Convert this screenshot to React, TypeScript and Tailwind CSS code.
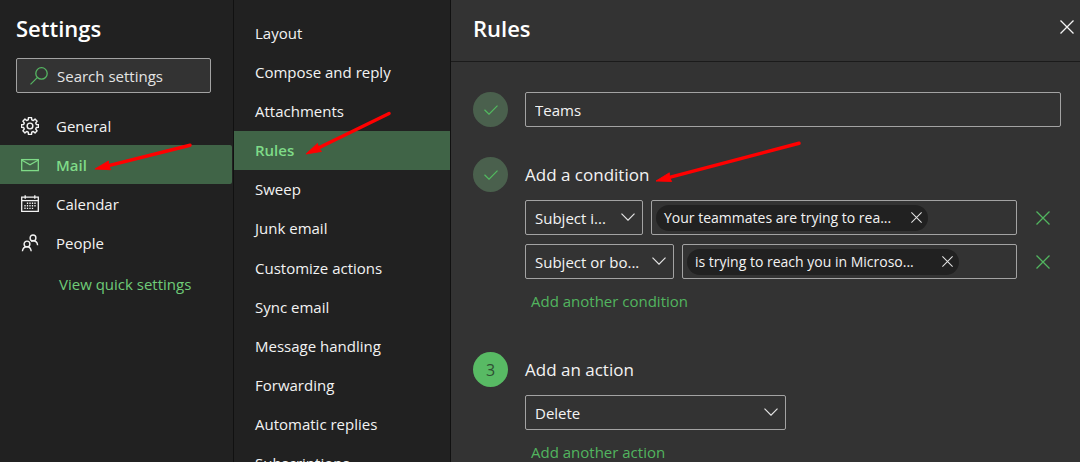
import type { ReactNode } from 'react';

const categories = [
  { label: 'General', icon: <GearIcon /> },
  { label: 'Mail', icon: <MailIcon /> },
  { label: 'Calendar', icon: <CalendarIcon /> },
  { label: 'People', icon: <PeopleIcon /> },
];

const mailSections = [
  'Layout',
  'Compose and reply',
  'Attachments',
  'Rules',
  'Sweep',
  'Junk email',
  'Customize actions',
  'Sync email',
  'Message handling',
  'Forwarding',
  'Automatic replies',
  'Subscriptions',
];

function SearchIcon() {
  return (
    <svg className="shrink-0" width="18" height="18" viewBox="0 0 18 18" fill="none" stroke="#55b562" strokeWidth="1.3">
      <circle cx="11.5" cy="6.4" r="5.7" />
      <path d="M7.5 10.4 0.5 17.4" />
    </svg>
  );
}

function GearIcon() {
  return (
    <svg width="18" height="18" viewBox="0.8 0.4 16.4 16.4" fill="none" stroke="currentColor" strokeWidth="1.3" strokeLinejoin="round">
      <path d="M7.4 3 7.6 1h2.8l.2 2 1.4.6 1.600-1.300 1.900 1.900-1.300 1.600.6 1.400 2 .2v2.400l-2 .2-.6 1.400 1.300 1.600-1.900 1.900-1.600-1.300-1.400.6-.2 2H7.600l-.2-2-1.400-.6-1.600 1.300-1.900-1.900 1.300-1.600-.6-1.400-2-.2V7.400l2-.2.6-1.400-1.300-1.600 1.900-1.900L6 3.600z" />
      <circle cx="9" cy="8.600" r="2.600" />
    </svg>
  );
}

function MailIcon() {
  return (
    <svg width="18" height="18" viewBox="0 0 18 18" fill="none" stroke="currentColor" strokeWidth="1.3">
      <rect x=".7" y="3.6" width="16.6" height="11" />
      <path d="m1 4.2 8 4.6 8-4.6" />
    </svg>
  );
}

function CalendarIcon() {
  return (
    <svg width="18" height="18" viewBox="0 0 18 18" fill="none" stroke="currentColor" strokeWidth="1.3">
      <path d="M.7 2.2h16.6v14.1H.7zM.7 5.6h16.6M4.2.3v3.4M13.8.3v3.4" />
      <path d="M6.5 7.5v7M9 7.5v7M11.5 7.5v7M14 7.5v4.5M4 10v4.5" strokeDasharray="1.4 1.2" />
    </svg>
  );
}

function PeopleIcon() {
  return (
    <svg width="18" height="18" viewBox="0 0 18 18" fill="none" stroke="currentColor" strokeWidth="1.4">
      <circle cx="12" cy="3.9" r="2.9" />
      <circle cx="6" cy="10" r="2.9" />
      <path d="M1.4 17.3c.3-2.8 2.2-4.5 4.6-4.5s3.900 1.700 4.200 4.500M10.200 7.300c.6-.4 1.200-.5 1.900-.5 2.400 0 4.200 1.600 4.500 4.400" />
    </svg>
  );
}

function CheckIcon() {
  return (
    <svg width="14" height="10" viewBox="0 0 14 10" fill="none" stroke="#52ba5f" strokeWidth="1.2">
      <path d="M.5 4.800 5 9.200 13.500.7" />
    </svg>
  );
}

function CloseIcon({ className }: { className: string }) {
  return (
    <svg className={className} viewBox="0 0 14 14" fill="none" stroke="currentColor" strokeWidth="1.3">
      <path d="m.5.5 13 13M13.500.5l-13 13" />
    </svg>
  );
}

// Red pointer drawn from the tail (top right) to the tip (bottom left)
function Arrow({ width, height, className }: { width: number; height: number; className: string }) {
  const length = Math.hypot(width, height);
  const angle = (Math.atan2(-height, width) * 180) / Math.PI;
  return (
    <svg
      className={`pointer-events-none absolute z-10 overflow-visible ${className}`}
      width={width}
      height={height}
      aria-hidden="true"
    >
      <g transform={`translate(0 ${height}) rotate(${angle})`} fill="#ff0000" stroke="#ff0000">
        <path d={`M12 0H${length - 1}`} strokeWidth="3.4" strokeLinecap="round" />
        <path d="M0 0 15-4.500 14 0 15 4.500z" strokeWidth=".8" />
      </g>
    </svg>
  );
}

function Dropdown({ id, label, value, className }: { id: string; label: string; value: string; className: string }) {
  return (
    <div className={`relative shrink-0 ${className}`}>
      <select
        id={id}
        aria-label={label}
        className="block h-[35px] w-full appearance-none rounded-xs border border-[#a3a3a3] bg-[#333333] pr-6 pl-[9px] text-[#f3f3f3] outline-none"
      >
        <option>{value}</option>
      </select>
      <svg
        className="pointer-events-none absolute top-[13px] right-2"
        width="14"
        height="8"
        viewBox="0 0 14 8"
        fill="none"
        stroke="#e4e4e4"
        strokeWidth="1.2"
      >
        <path d="m.5.700 6.500 6.500L13.500.7" />
      </svg>
    </div>
  );
}

function Condition({ id, field, fieldClass, text }: { id: string; field: string; fieldClass: string; text: string }) {
  return (
    <div className="flex items-center">
      <Dropdown id={`${id}-field`} label="Condition" value={field} className={fieldClass} />
      <div className="ml-2 flex h-[35px] min-w-0 flex-1 items-center rounded-xs border border-[#a3a3a3] px-1">
        <span className="flex h-[26px] w-[272px] shrink-0 items-center justify-between rounded-full bg-[#212121] pr-[6px] pl-2 text-sm whitespace-nowrap text-[#f3f3f3]">
          {text}
          <button type="button" aria-label="Remove value" className="text-[#e4e4e4]">
            <CloseIcon className="size-[11px]" />
          </button>
        </span>
        <input id={`${id}-value`} aria-label="Condition value" className="w-full min-w-0 bg-transparent outline-none" />
      </div>
      <button type="button" aria-label="Remove condition" className="mr-[30px] ml-[19px] shrink-0 text-[#52b55f]">
        <CloseIcon className="size-[14px]" />
      </button>
    </div>
  );
}

function Step({ badge, active, children }: { badge: ReactNode; active?: boolean; children: ReactNode }) {
  return (
    <section className="flex gap-[17px]">
      <div
        className={`flex size-[35px] shrink-0 items-center justify-center rounded-full text-base ${
          active ? 'bg-[#58ba64] text-[#2f4f33]' : 'bg-[#4a604d]'
        }`}
      >
        {badge}
      </div>
      <div className="min-w-0 flex-1">{children}</div>
    </section>
  );
}

export default function App() {
  return (
    <div className="flex h-screen overflow-hidden bg-[#333333] font-['Open_Sans','Noto_Sans',sans-serif] text-[15px] leading-5 text-[#f3f3f3]">
      {/* Categories */}
      <aside className="w-[234px] shrink-0 border-r border-[#111111] bg-[#212121]">
        <h1 className="px-4 pt-[13px] text-[22px] leading-[30px] font-semibold text-white">Settings</h1>
        <div className="mx-4 mt-[15px] flex h-[35px] w-[195px] items-center gap-[9px] rounded-xs border border-[#a3a3a3] bg-[#333333] pl-[13px]">
          <SearchIcon />
          <input
            type="search"
            aria-label="Search settings"
            placeholder="Search settings"
            className="w-full min-w-0 bg-transparent outline-none placeholder:text-[#e4e4e4]"
          />
        </div>
        <nav className="mt-[13px] mr-px">
          {categories.map(({ label, icon }) => (
            <a
              key={label}
              href="#"
              className={`relative flex h-[39px] items-center gap-[17px] pl-[21px] ${
                label === 'Mail' ? 'rounded-r-xs bg-[#406447] font-semibold text-[#7fdb87]' : ''
              }`}
            >
              {icon}
              {label}
              {label === 'Mail' && <Arrow width={96} height={24} className="top-0 left-[95px]" />}
            </a>
          ))}
        </nav>
        <a href="#" className="mt-3 ml-[59px] inline-block text-[#6fcc78]">View quick settings</a>
      </aside>

      {/* Mail sections */}
      <nav className="w-[217px] shrink-0 border-r border-[#111111] bg-[#212121] pt-[13px]">
        <div className="grid h-[470px] auto-rows-fr">
          {mailSections.map((label) => (
            <a
              key={label}
              href="#"
              className={`relative flex items-center pl-[21px] ${
                label === 'Rules' ? 'bg-[#406447] font-semibold text-[#7fdb87]' : ''
              }`}
            >
              {label}
              {label === 'Rules' && <Arrow width={84} height={41} className="bottom-4 left-[72px]" />}
            </a>
          ))}
        </div>
      </nav>

      {/* Rule editor */}
      <main className="min-w-0 flex-1">
        <header className="flex h-[62px] items-start justify-between border-b border-[#1b1b1b] pt-[13px] pr-[6px] pl-[22px]">
          <h2 className="text-[22px] leading-[30px] font-semibold text-white">Rules</h2>
          <button type="button" aria-label="Close" className="mt-[7px]">
            <CloseIcon className="size-[14px]" />
          </button>
        </header>
        <form className="pt-[30px] pl-[22px]">
          <Step badge={<CheckIcon />}>
            <input
              aria-label="Rule name"
              defaultValue="Teams"
              className="block h-[35px] w-[calc(100%-19px)] rounded-xs border border-[#a3a3a3] bg-[#333333] px-[9px] outline-none"
            />
          </Step>
          <div className="mt-[30px]">
            <Step badge={<CheckIcon />}>
              <h3 className="relative mb-[7px] text-[17px] leading-9">
                Add a condition
                <Arrow width={144} height={38} className="bottom-3 left-[131px]" />
              </h3>
              <div className="space-y-[9px]">
                <Condition
                  id="subject"
                  field="Subject i..."
                  fieldClass="w-[118px]"
                  text="Your teammates are trying to rea..."
                />
                <Condition
                  id="body"
                  field="Subject or bo..."
                  fieldClass="w-[149px]"
                  text="is trying to reach you in Microso..."
                />
              </div>
              <a href="#" className="mt-3 ml-[6px] inline-block text-[#52b55f]">Add another condition</a>
            </Step>
          </div>
          <div className="mt-[41px]">
            <Step badge="3" active>
              <h3 className="mb-[7px] text-[17px] leading-9">Add an action</h3>
              <Dropdown id="action" label="Action" value="Delete" className="w-[261px]" />
              <a href="#" className="mt-3 ml-[6px] inline-block text-[#52b55f]">Add another action</a>
            </Step>
          </div>
        </form>
      </main>
    </div>
  );
}
